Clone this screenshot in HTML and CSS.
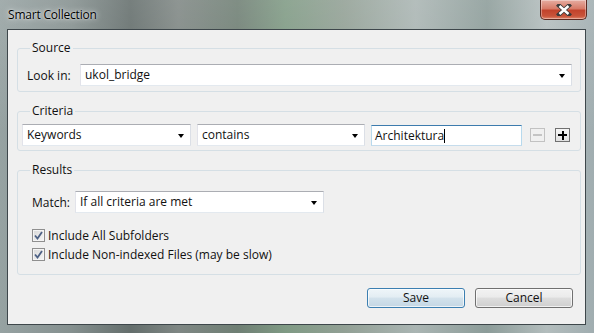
FILE: index.html
```html
<!DOCTYPE html>
<html lang="en">
  <head>
    <meta charset="UTF-8" />
    <title>Smart Collection</title>
    <link rel="stylesheet" href="styles.css">
  </head>
  <body>
    <div class="window">
      <div class="titlebar">
        <span class="title">Smart Collection</span>
        <div class="close">
          <svg width="16" height="12" viewBox="0 0 16 12">
            <path d="M3 1.5 L13 10.5 M13 1.5 L3 10.5" stroke="#3b3b3b" stroke-width="4.2" stroke-linecap="square" />
            <path d="M3.5 2 L12.5 10 M12.5 2 L3.5 10" stroke="#ffffff" stroke-width="2.4" />
          </svg>
        </div>
      </div>

      <div class="client">
        <fieldset class="group">
          <legend>Source</legend>
          <div class="body source-body">
            <div class="row">
              <span class="label look-label">Look in:</span>
              <div class="combo grow">ukol_bridge<span class="arrow"></span></div>
            </div>
          </div>
        </fieldset>

        <fieldset class="group criteria">
          <legend>Criteria</legend>
          <div class="body criteria-body">
            <div class="row">
              <div class="combo field-combo">Keywords<span class="arrow"></span></div>
              <div class="combo op-combo">contains<span class="arrow"></span></div>
              <div class="textbox focused">Architektura<span class="caret"></span></div>
              <div class="mini disabled"><span class="minus"></span></div>
              <div class="mini"><span class="minus"></span><span class="vbar"></span></div>
            </div>
          </div>
        </fieldset>

        <fieldset class="group results">
          <legend>Results</legend>
          <div class="body results-body">
            <div class="row">
              <span class="label match-label">Match:</span>
              <div class="combo match-combo">If all criteria are met<span class="arrow"></span></div>
            </div>
            <div class="checks">
              <div class="check-row">
                <span class="checkbox">
                  <svg width="9" height="9" viewBox="0 0 9 9"><path d="M1 4.5 L3.5 7.5 L8 1" fill="none" stroke="#4d6185" stroke-width="1.8" /></svg>
                </span>
                Include All Subfolders
              </div>
              <div class="check-row">
                <span class="checkbox">
                  <svg width="9" height="9" viewBox="0 0 9 9"><path d="M1 4.5 L3.5 7.5 L8 1" fill="none" stroke="#4d6185" stroke-width="1.8" /></svg>
                </span>
                Include Non-indexed Files (may be slow)
              </div>
            </div>
          </div>
        </fieldset>

        <div class="buttons">
          <div class="btn default">Save</div>
          <div class="btn">Cancel</div>
        </div>
      </div>
    </div>
  </body>
</html>
```

FILE: styles.css
```css
* {
  box-sizing: border-box;
}
body {
  margin: 0;
  padding: 0;
  font-family: "Open Sans", "Noto Sans", Arial, sans-serif;
  font-size: 12px;
  color: #111;
}
.window {
  width: 594px;
  height: 333px;
  display: flex;
  flex-direction: column;
  background:
    linear-gradient(180deg, rgba(255, 255, 255, 0.12) 0%, rgba(255, 255, 255, 0) 40%),
    linear-gradient(90deg, #96a2a2 0%, #85908f 12%, #646e6c 22%, #7f8784 30%, #6f7f74 40%, #7f9a84 48%, #92a095 58%, #aab5b3 70%, #8c9c99 82%, #b3bdbd 92%, #a0adb0 100%);
}
.titlebar {
  height: 29px;
  display: flex;
  align-items: flex-start;
}
.title {
  padding: 6px 0 0 8px;
  color: #000;
  letter-spacing: -0.2px;
  text-shadow: 0 0 6px rgba(255, 255, 255, 0.9), 0 0 2px rgba(255, 255, 255, 0.8);
}
.close {
  margin-left: auto;
  margin-right: 7px;
  width: 47px;
  height: 20px;
  border: 1px solid #5c2a22;
  border-top: none;
  border-radius: 0 0 5px 5px;
  background: linear-gradient(180deg, #e6ada1 0%, #d77b68 45%, #c2432c 55%, #c9543a 85%, #e0866c 100%);
  box-shadow: inset 0 0 0 1px rgba(255, 255, 255, 0.35);
  display: flex;
  align-items: center;
  justify-content: center;
}
.client {
  flex: 1;
  margin: 0 8px 8px 7px;
  background: #f0f0f0;
  border: 1px solid #3e474b;
  display: flex;
  flex-direction: column;
}
.group {
  margin: 12px 4px 0 9px;
  padding: 0;
  border: 1px solid #d5dfe5;
  border-radius: 3px;
  min-width: 0;
}
.group:first-child {
  margin-top: 11px;
}
.group legend {
  margin-left: 12px;
  padding: 0 2px;
  line-height: 14px;
  color: #111;
}
.row {
  display: flex;
  align-items: center;
}
.source-body {
  padding: 9px 8px 5px 9px;
}
.criteria-body {
  padding: 6px 10px 4px 4px;
}
.results-body {
  padding: 14px 8px 10px 14px;
}
.label {
  flex: 0 0 auto;
}
.look-label {
  width: 53px;
}
.match-label {
  width: 43px;
}
.combo {
  position: relative;
  height: 22px;
  line-height: 20px;
  padding-left: 4px;
  background: #fff;
  border: 1px solid #e3e9ef;
  border-top-color: #abadb3;
  border-left-color: #e2e3ea;
  border-right-color: #dbdfe6;
  white-space: nowrap;
}
.grow {
  flex: 1;
}
.arrow {
  position: absolute;
  right: 6px;
  top: 9px;
  width: 0;
  height: 0;
  border-left: 3.5px solid transparent;
  border-right: 3.5px solid transparent;
  border-top: 4px solid #000;
}
.field-combo {
  width: 169px;
}
.op-combo {
  width: 168px;
  margin-left: 6px;
}
.match-combo {
  width: 249px;
}
.textbox {
  width: 151px;
  height: 21px;
  line-height: 19px;
  margin-left: 6px;
  padding-left: 3px;
  background: #fff;
  border: 1px solid #b7d9ed;
  white-space: nowrap;
}
.textbox.focused {
  border-color: #a4c9e3 #b7d9ed #c5dcec #b7d9ed;
  border-top-color: #3d7bad;
}
.caret {
  display: inline-block;
  width: 1px;
  height: 14px;
  background: #000;
  vertical-align: -3px;
}
.mini {
  position: relative;
  width: 15px;
  height: 14px;
  margin-left: 8px;
  border: 1px solid #707070;
  background: linear-gradient(180deg, #f6f6f6, #e0e0e0);
}
.mini + .mini {
  margin-left: 10px;
}
.mini.disabled {
  border-color: #c2c2c2;
  background: #f0f0f0;
}
.minus {
  position: absolute;
  left: 2px;
  top: 5px;
  width: 9px;
  height: 2px;
  background: #000;
}
.vbar {
  position: absolute;
  left: 5.5px;
  top: 1.5px;
  width: 2px;
  height: 9px;
  background: #000;
}
.disabled .minus {
  background: #c4c4c4;
}
.checks {
  margin-top: 13px;
}
.check-row {
  display: flex;
  align-items: center;
  height: 19px;
}
.checkbox {
  width: 13px;
  height: 13px;
  margin-right: 3px;
  border: 1px solid #8f8f8f;
  background: linear-gradient(135deg, #d8d8d8, #f6f6f6);
  box-shadow: inset 0 0 0 1px #f4f4f4;
  display: flex;
  align-items: center;
  justify-content: center;
}
.buttons {
  display: flex;
  justify-content: flex-end;
  gap: 10px;
  margin-top: 13px;
  padding-right: 12px;
}
.btn {
  width: 98px;
  height: 20px;
  line-height: 18px;
  text-align: center;
  border: 1px solid #707070;
  border-radius: 3px;
  background: linear-gradient(180deg, #f2f2f2 0%, #ebebeb 45%, #dddddd 50%, #cfcfcf 100%);
  box-shadow: inset 0 0 0 1px rgba(255, 255, 255, 0.7);
}
.btn.default {
  border-color: #3c7fb1;
  background: linear-gradient(180deg, #eef5f9 0%, #e3edf3 45%, #d3e2ec 50%, #c4d7e4 100%);
}
```
